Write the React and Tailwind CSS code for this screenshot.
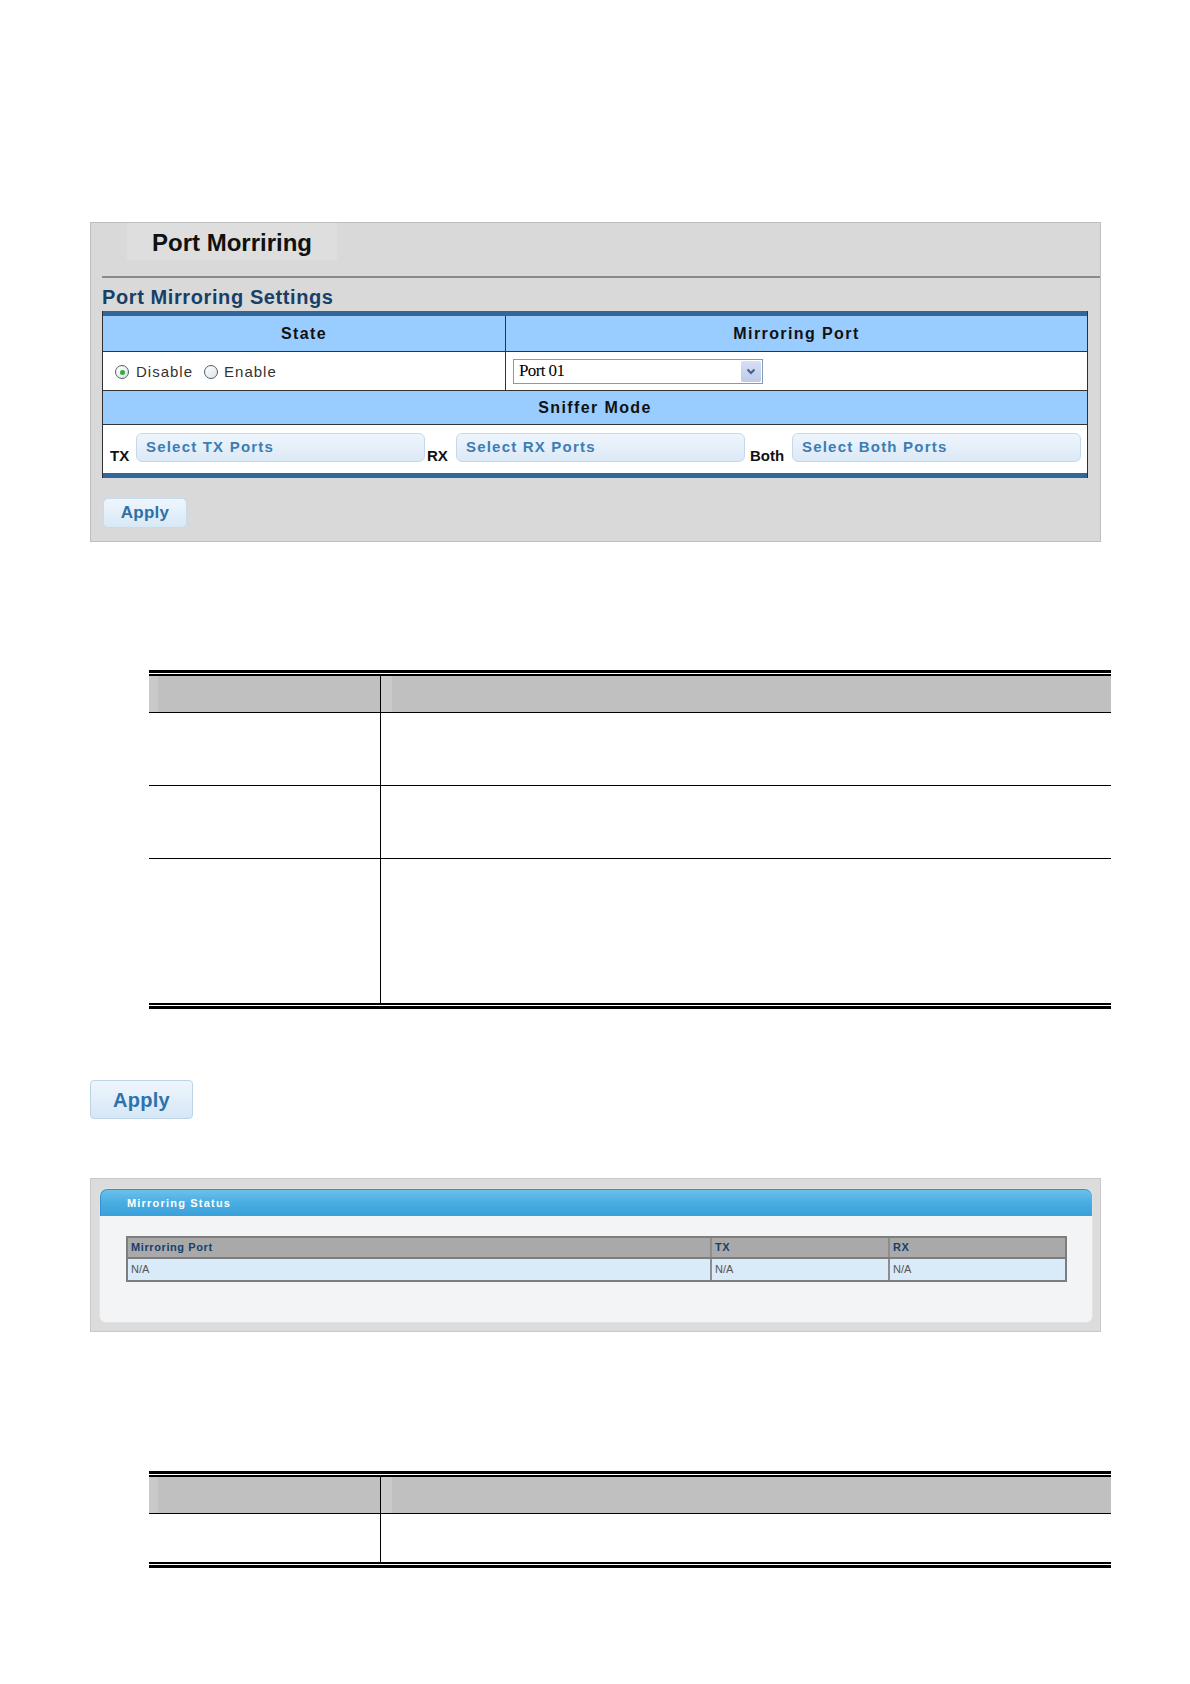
import React from 'react';

const sans = "font-['Liberation_Sans',Arial,sans-serif]";

const Radio = ({ checked }) => (
  <span className="flex h-[14px] w-[14px] items-center justify-center rounded-full border border-[#4f5f70] bg-linear-to-br from-[#ffffff] to-[#dde2e8]">
    {checked && <span className="h-[5px] w-[5px] rounded-full bg-[#2fae3e]" />}
  </span>
);

const PortButton = ({ label }) => (
  <div className="flex h-[29px] w-[289px] items-start rounded-[6px] border border-[#c4d9ea] bg-linear-to-b from-[#eef5fc] to-[#dbe9f6] pl-[9px] pt-[3px]">
    <span className="text-[15px] font-bold leading-[20px] tracking-[1.2px] text-[#3c7db4]">{label}</span>
  </div>
);

const DescTable = ({ rows }) => (
  <div className="ml-[59px] w-[962px]">
    <div className="h-[3px] bg-black" />
    <div className="h-[1px] bg-white" />
    <div className="h-[2px] bg-black" />
    <div className="grid h-[37px] grid-cols-[232px_1fr] border-b border-black bg-[#c0c0c0]">
      <div className="flex border-r border-black">
        <div className="w-[9px] bg-[#c9c9c9]" />
      </div>
      <div className="flex">
        <div className="w-[11px] bg-[#cacaca]" />
      </div>
    </div>
    {rows.map((row, i) => (
      <div
        key={i}
        className={`grid grid-cols-[232px_1fr] ${row} ${i < rows.length - 1 ? 'border-b border-black' : ''}`}
      >
        <div className="border-r border-black" />
        <div />
      </div>
    ))}
    <div className="h-[2px] bg-black" />
    <div className="h-[1px] bg-white" />
    <div className="h-[3px] bg-black" />
  </div>
);

export default function App() {
  return (
    <div className={`min-h-[1684px] w-[1190px] bg-white pl-[90px] pt-[222px] ${sans}`}>
      {/* Port Mirroring settings panel */}
      <div className="h-[320px] w-[1011px] border border-[#bebebe] bg-[#d9d9d9]">
        <div className="ml-[36px] flex h-[37px] w-[210px] items-center bg-[#dedede] pl-[25px] pt-[3px]">
          <span className="text-[24px] font-bold leading-[28px] text-[#111]">Port Morriring</span>
        </div>
        <div className="ml-[11px] mt-[16px] h-[2px] bg-[#8a8a8a]" />
        <div className="ml-[11px] mt-[7px] h-[24px] text-[20px] font-bold leading-[24px] tracking-[0.6px] text-[#173f68]">
          Port Mirroring Settings
        </div>
        <div className="ml-[11px] mt-[2px] w-[986px] border-x border-[#2f2f2f]">
          <div className="h-[5px] bg-[#336699]" />
          <div className="grid h-[36px] grid-cols-[403px_1fr] border-b border-[#333] bg-[#99ccff]">
            <div className="flex items-center justify-center border-r border-[#333] text-[16px] font-bold tracking-[1.4px] text-[#111]">
              State
            </div>
            <div className="flex items-center justify-center text-[16px] font-bold tracking-[1.4px] text-[#111]">
              Mirroring Port
            </div>
          </div>
          <div className="grid h-[39px] grid-cols-[403px_1fr] border-b border-[#333] bg-white">
            <div className="flex items-center border-r border-[#333] pl-[12px] pt-[2px] text-[15px] tracking-[1px] text-[#333]">
              <Radio checked />
              <span className="ml-[7px]">Disable</span>
              <span className="ml-[11px]">
                <Radio />
              </span>
              <span className="ml-[6px]">Enable</span>
            </div>
            <div className="flex items-center pl-[7px]">
              <div className="flex h-[25px] w-[250px] items-center justify-between border border-[#7f9db9] bg-white pl-[5px] pr-[1px]">
                <span className="font-['Liberation_Serif',serif] text-[17px] leading-[20px] tracking-[-0.6px] text-black">
                  Port 01
                </span>
                <span className="flex h-[21px] w-[20px] items-center justify-center rounded-[2px] bg-linear-to-b from-[#d6e0f5] to-[#bccbeb]">
                  <svg width="10" height="7" viewBox="0 0 10 7">
                    <path d="M1.5 1.5 L5 5 L8.5 1.5" fill="none" stroke="#4a5e86" strokeWidth="2" />
                  </svg>
                </span>
              </div>
            </div>
          </div>
          <div className="flex h-[34px] items-center justify-center border-b border-[#333] bg-[#99ccff] text-[16px] font-bold tracking-[1.4px] text-[#111]">
            Sniffer Mode
          </div>
          <div className="flex h-[48px] items-start bg-white pl-[7px] pt-[8px]">
            <span className="mt-[15px] w-[26px] text-[15px] font-bold leading-[15px] text-[#111]">TX</span>
            <PortButton label="Select TX Ports" />
            <span className="ml-[2px] mt-[15px] w-[29px] text-[15px] font-bold leading-[15px] text-[#111]">RX</span>
            <PortButton label="Select RX Ports" />
            <span className="ml-[5px] mt-[15px] w-[42px] text-[15px] font-bold leading-[15px] text-[#111]">Both</span>
            <PortButton label="Select Both Ports" />
          </div>
          <div className="h-[5px] bg-[#336699]" />
        </div>
        <div className="ml-[12px] mt-[20px] flex h-[30px] w-[84px] items-center justify-center rounded-[5px] border border-[#c6dbeb] bg-linear-to-b from-[#eef6fd] to-[#d8e8f6]">
          <span className="text-[17px] font-bold tracking-[0.3px] text-[#2f70a6]">Apply</span>
        </div>
      </div>

      {/* description table */}
      <div className="mt-[128px]">
        <DescTable rows={['h-[73px]', 'h-[73px]', 'h-[144px]']} />
      </div>

      {/* Apply button */}
      <div className="mt-[71px] flex h-[39px] w-[103px] items-center justify-center rounded-[4px] border border-[#bcd3e6] bg-linear-to-b from-[#eef6fd] to-[#d6e7f6]">
        <span className="text-[20px] font-bold tracking-[0.3px] text-[#2e72ac]">Apply</span>
      </div>

      {/* Mirroring status panel */}
      <div className="mt-[59px] h-[154px] w-[1011px] border border-[#c8c8c8] bg-[#dcdcdc] pl-[8px] pt-[9px]">
        <div className="h-[135px] w-[994px] rounded-[7px] border border-[#e2e2e2] bg-[#f3f4f5]">
          <div className="flex h-[27px] items-center rounded-t-[7px] border-l border-t border-[#3193d3] bg-linear-to-b from-[#6bc0ea] via-[#48ade2] to-[#3aa0da] pl-[26px]">
            <span className="text-[11px] font-bold leading-[13px] tracking-[1.2px] text-white">Mirroring Status</span>
          </div>
          <div className="ml-[26px] mt-[20px] w-[941px] border-2 border-[#7d7d7d] text-[11px]">
            <div className="grid h-[21px] grid-cols-[582px_178px_1fr] border-b-2 border-[#7d7d7d] bg-[#a9a9a9] font-bold tracking-[0.6px] text-[#173f6e]">
              <div className="flex items-center pl-[3px]">Mirroring Port</div>
              <div className="flex items-center border-l-2 border-[#8d8d8d] pl-[3px]">TX</div>
              <div className="flex items-center border-l-2 border-[#8d8d8d] pl-[3px]">RX</div>
            </div>
            <div className="grid h-[21px] grid-cols-[582px_178px_1fr] bg-[#d9eaf8] text-[#555]">
              <div className="flex items-center pl-[3px]">N/A</div>
              <div className="flex items-center border-l-2 border-[#8d8d8d] pl-[3px]">N/A</div>
              <div className="flex items-center border-l-2 border-[#8d8d8d] pl-[3px]">N/A</div>
            </div>
          </div>
        </div>
      </div>

      {/* second description table */}
      <div className="mt-[139px]">
        <DescTable rows={['h-[48px]']} />
      </div>
    </div>
  );
}
